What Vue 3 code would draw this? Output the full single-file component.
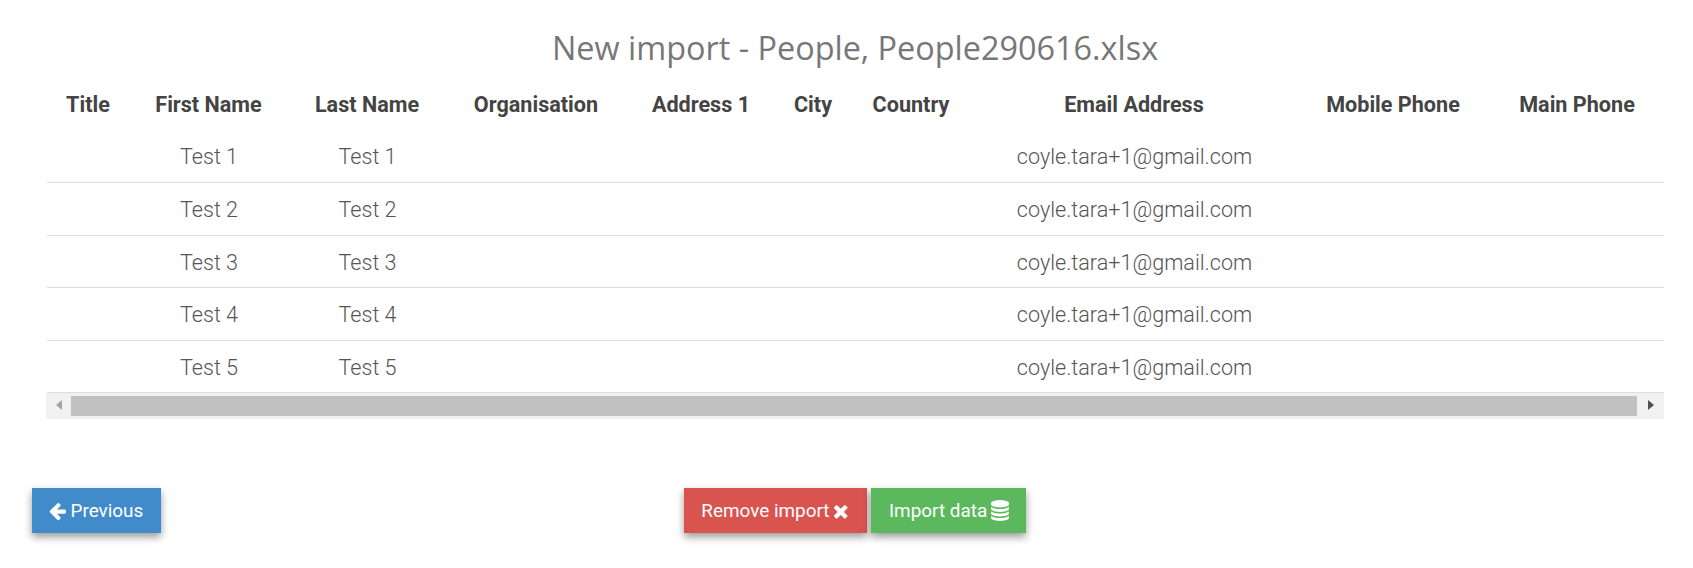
<script setup>
const columns = [
  { name: 'Title', width: 84 },
  { name: 'First Name', width: 157 },
  { name: 'Last Name', width: 160 },
  { name: 'Organisation', width: 178 },
  { name: 'Address 1', width: 152 },
  { name: 'City', width: 72 },
  { name: 'Country', width: 124 },
  { name: 'Email Address', width: 322 },
  { name: 'Mobile Phone', width: 196 },
  { name: 'Main Phone', width: 172 }
]
const rows = [1, 2, 3, 4, 5].map((n) => ({
  first: `Test ${n}`,
  last: `Test ${n}`,
  email: 'coyle.tara+1@gmail.com'
}))
</script>

<template>
  <main class="page">
    <h1 class="heading">New import - People, People290616.xlsx</h1>
    <section class="table-wrap">
      <div class="table-scroll">
        <table class="grid">
          <colgroup>
            <col v-for="c in columns" :key="c.name" :style="{ width: c.width + 'px' }" />
          </colgroup>
          <thead>
            <tr>
              <th v-for="c in columns" :key="c.name">{{ c.name }}</th>
            </tr>
          </thead>
          <tbody>
            <tr v-for="(r, i) in rows" :key="i">
              <td></td>
              <td>{{ r.first }}</td>
              <td>{{ r.last }}</td>
              <td></td>
              <td></td>
              <td></td>
              <td></td>
              <td>{{ r.email }}</td>
              <td></td>
              <td></td>
            </tr>
          </tbody>
        </table>
      </div>
      <div class="scrollbar">
        <span class="arrow arrow-left"></span>
        <span class="thumb"></span>
        <span class="arrow arrow-right"></span>
      </div>
    </section>
    <footer class="actions">
      <div class="left">
        <button class="btn blue">
          <svg class="icon arrow-icon" viewBox="128 0 1536 1792"><path d="M1664 896v128q0 53-32.5 90.5t-84.5 37.5h-704l293 294q38 36 38 90t-38 90l-75 76q-37 37-90 37-52 0-91-37l-651-652q-37-37-37-90 0-52 37-91l651-650q38-38 91-38 52 0 90 38l75 74q38 38 38 91t-38 91l-293 293h704q52 0 84.5 37.5t32.5 90.5z"/></svg>
          Previous
        </button>
      </div>
      <div class="center">
        <button class="btn red">
          Remove import
          <svg class="icon times-icon" viewBox="302 0 1188 1792"><path d="M1490 1322q0 40-28 68l-136 136q-28 28-68 28t-68-28l-294-294-294 294q-28 28-68 28t-68-28l-136-136q-28-28-28-68t28-68l294-294-294-294q-28-28-28-68t28-68l136-136q28-28 68-28t68 28l294 294 294-294q28-28 68-28t68 28l136 136q28 28 28 68t-28 68l-294 294 294 294q28 28 28 68z"/></svg>
        </button>
        <button class="btn green">
          Import data
          <svg class="icon db-icon" viewBox="128 0 1536 1792"><path d="M896 768q237 0 443-43t325-127v170q0 69-103 128t-280 93.5-385 34.5-385-34.5-280-93.5-103-128v-170q119 84 325 127t443 43zm0 768q237 0 443-43t325-127v170q0 69-103 128t-280 93.5-385 34.5-385-34.5-280-93.5-103-128v-170q119 84 325 127t443 43zm0-384q237 0 443-43t325-127v170q0 69-103 128t-280 93.5-385 34.5-385-34.5-280-93.5-103-128v-170q119 84 325 127t443 43zm0-1152q208 0 385 34.5t280 93.5 103 128v128q0 69-103 128t-280 93.5-385 34.5-385-34.5-280-93.5-103-128v-128q0-69 103-128t280-93.5 385-34.5z"/></svg>
        </button>
      </div>
      <div></div>
    </footer>
  </main>
</template>

<style>
html, body { margin: 0; background: #fff; }
</style>

<style scoped>
.page {
  width: 1693px;
  height: 568px;
  box-sizing: border-box;
  padding-top: 25px;
  overflow: hidden;
  font-family: Roboto, "Liberation Sans", sans-serif;
}
.heading {
  margin: 0;
  height: 45px;
  padding-left: 17px;
  font-family: "Open Sans", sans-serif;
  font-size: 32.4px;
  font-weight: 400;
  line-height: 45px;
  color: #777;
  text-align: center;
}
.table-wrap {
  margin: 0 29px 0 46px;
}
.table-scroll {
  margin-left: 1px;
  overflow: hidden;
}
.grid {
  width: 1617px;
  table-layout: fixed;
  border-collapse: collapse;
  color: #555;
  font-size: 21.6px;
}
th {
  height: 60px;
  box-sizing: border-box;
  padding: 8px 2px 0 0;
  font-weight: 700;
  color: #444;
  text-align: center;
  white-space: nowrap;
  vertical-align: middle;
}
td {
  height: 52.6px;
  box-sizing: border-box;
  padding: 1.5px 1px 0 0;
  font-weight: 300;
  text-align: center;
  white-space: nowrap;
  border-bottom: 1px solid #ddd;
}
.scrollbar {
  display: flex;
  align-items: flex-start;
  height: 26px;
  background: #f1f1f1;
}
.arrow {
  flex: none;
  display: flex;
  height: 24px;
  align-items: center;
  justify-content: center;
}
.arrow-left { width: 25px; }
.arrow-right { width: 27px; }
.arrow::before {
  content: "";
  border-top: 5px solid transparent;
  border-bottom: 5px solid transparent;
}
.arrow-left::before { border-right: 6px solid #a3a3a3; }
.arrow-right::before { border-left: 6px solid #505050; }
.thumb {
  flex: 1;
  height: 20px;
  margin-top: 3px;
  background: #c1c1c1;
}
.actions {
  display: grid;
  grid-template-columns: 1fr auto 1fr;
  margin: 69px 14.5px 0 31.5px;
}
.center {
  display: flex;
  gap: 4px;
}
.btn {
  display: inline-flex;
  align-items: center;
  justify-content: center;
  gap: 5px;
  height: 45px;
  padding: 0 18px;
  border: 0;
  font-family: inherit;
  font-size: 18.9px;
  font-weight: 400;
  color: #fff;
  box-shadow: 0 4px 8px rgba(0, 0, 0, 0.4);
}
.blue { background: #428bca; padding: 0 18px 0 17px; }
.red { background: #d9534f; padding: 0 19px 0 17px; }
.green { background: #5cb85c; padding: 0 16.5px 0 18px; gap: 4px; }
.icon {
  fill: #fff;
}
.arrow-icon { width: 17px; height: 19.8px; }
.times-icon { width: 13.5px; height: 20.4px; }
.db-icon { width: 18px; height: 21px; }
</style>
